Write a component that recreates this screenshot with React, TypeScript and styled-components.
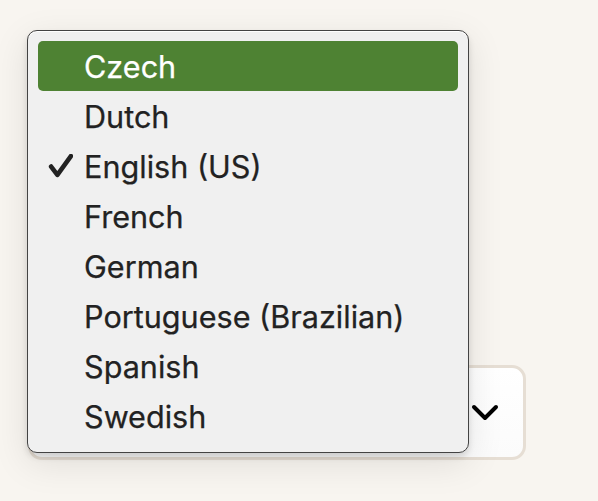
import React from "react";
import styled, { createGlobalStyle } from "styled-components";

const GlobalStyle = createGlobalStyle`
  html, body {
    margin: 0;
    padding: 0;
    background: #f8f5f0;
  }
  body {
    font-family: Inter, "Noto Sans", "Liberation Sans", sans-serif;
    -webkit-font-smoothing: antialiased;
  }
`;

const Page = styled.div`
  position: relative;
  width: 598px;
  height: 501px;
  overflow: hidden;
  background: #f8f5f0;
`;

const Form = styled.form`
  display: flex;
  flex-direction: column;
  align-items: flex-start;
  padding: 160px 0 0 28px;
  gap: 130px;
`;

const TextField = styled.div`
  width: 440px;
  height: 75px;
  box-sizing: border-box;
  border: 2px solid #1d2433;
  border-radius: 10px;
  background: #ffffff;
`;

const SelectButton = styled.button`
  width: 498px;
  height: 95px;
  box-sizing: border-box;
  display: flex;
  align-items: center;
  justify-content: flex-end;
  padding: 0 24px 0 0;
  border: 3px solid #e6ded4;
  border-radius: 14px;
  background: linear-gradient(180deg, #ffffff 0%, #fbfbfb 100%);
  cursor: pointer;
`;

const Menu = styled.ul`
  position: absolute;
  left: 27px;
  top: 30px;
  width: 442px;
  box-sizing: border-box;
  margin: 0;
  padding: 10px 10px 11px;
  list-style: none;
  background: #f0f0f0;
  border: 1.5px solid #434343;
  border-radius: 10px;
  box-shadow: inset 0 1px 0 rgba(255, 255, 255, 0.95),
    0 4px 6px rgba(0, 0, 0, 0.12), 0 10px 36px rgba(0, 0, 0, 0.1);
`;

const Item = styled.li<{ $active?: boolean }>`
  position: relative;
  height: 50px;
  box-sizing: border-box;
  display: flex;
  align-items: center;
  padding: 3px 0 0 46px;
  border-radius: 5px;
  font-size: 30.6px;
  line-height: 1;
  -webkit-text-stroke: 0.25px currentColor;
  color: ${(p) => (p.$active ? "#ffffff" : "#222222")};
  background: ${(p) => (p.$active ? "#4e8233" : "transparent")};
`;

const Check = styled.svg`
  position: absolute;
  left: 10px;
  top: 13px;
  width: 25px;
  height: 25px;
`;

const languages = [
  "Czech",
  "Dutch",
  "English (US)",
  "French",
  "German",
  "Portuguese (Brazilian)",
  "Spanish",
  "Swedish",
];

const highlighted = "Czech";
const selected = "English (US)";

export default function App() {
  return (
    <Page>
      <GlobalStyle />
      <Form>
        <TextField />
        <SelectButton type="button" aria-label="Language">
          <svg width="28" height="20" viewBox="0 0 28 20">
            <polyline
              points="3,4 14,15 25,4"
              fill="none"
              stroke="#000"
              strokeWidth="4"
              strokeLinecap="round"
              strokeLinejoin="round"
            />
          </svg>
        </SelectButton>
      </Form>
      <Menu role="listbox">
        {languages.map((lang) => (
          <Item key={lang} $active={lang === highlighted} role="option">
            {lang === selected && (
              <Check viewBox="0 0 24 24">
                <polyline
                  points="3,12 9,20 22,2"
                  fill="none"
                  stroke="#222"
                  strokeWidth="4.4"
                  strokeLinecap="round"
                  strokeLinejoin="round"
                />
              </Check>
            )}
            {lang}
          </Item>
        ))}
      </Menu>
    </Page>
  );
}
